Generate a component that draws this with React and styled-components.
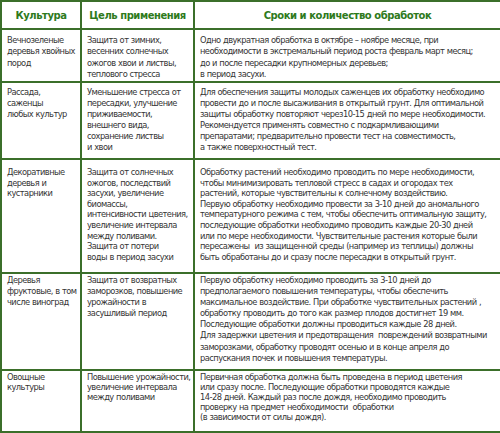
import React from "react";
import styled, { createGlobalStyle } from "styled-components";

const GlobalStyle = createGlobalStyle`
    html, body {
        margin: 0;
        padding: 0;
        background: #ffffff;
    }
    body {
        width: 500px;
        height: 433px;
        overflow: hidden;
    }
`;

const Table = styled.table`
    width: 500px;
    border-collapse: collapse;
    table-layout: fixed;
    font-family: "DejaVu Sans", Verdana, sans-serif;
    color: #353535;
    background: #ffffff;
`;

const HeadCell = styled.th`
    height: 26px;
    padding: 0;
    border: 2px solid #3b6f2a;
    color: #2e7a1c;
    font-size: 10px;
    font-weight: bold;
    letter-spacing: -0.45px;
    text-align: center;
    vertical-align: middle;
    white-space: nowrap;
`;

const Row = styled.tr`
    height: ${(p) => p.$h}px;
`;

const Cell = styled.td`
    padding: ${(p) => p.$pt}px 2px 0 5px;
    border: 2px solid #3b6f2a;
    vertical-align: top;
    font-size: 8.3px;
    letter-spacing: -0.55px;
    word-spacing: 0.3px;
    line-height: ${(p) => p.$lh}px;
    white-space: nowrap;
    overflow: hidden;
`;

const Line = styled.div`
    white-space: pre;
`;

const rows = [
    {
        h: 53, pt: 5, lh: 11.3,
        culture: ["Вечнозеленые", "деревья хвойных", "пород"],
        goal: ["Защита от зимних,", "весенних солнечных", "ожогов хвои и листвы,", "теплового стресса"],
        terms: [
            "Одно двукратная обработка в октябре – ноябре месяце, при",
            "необходимости в экстремальный период роста февраль март месяц;",
            "до и после пересадки крупномерных деревьев;",
            "в период засухи.",
        ],
    },
    {
        h: 77, pt: 4, lh: 11,
        culture: ["Рассада,", "саженцы", "любых культур"],
        goal: ["Уменьшение стресса от", "пересадки, улучшение", "приживаемости,", "внешнего вида,", "сохранение листвы", "и хвои"],
        terms: [
            "Для обеспечения защиты молодых саженцев их обработку необходимо",
            "провести до и после высаживания в открытый грунт. Для оптимальной",
            "защиты обработку повторяют через10-15 дней по мере необходимости.",
            "Рекомендуется применять совместно с подкармливающими",
            "препаратами; предварительно провести тест на совместимость,",
            "а также поверхностный тест.",
        ],
    },
    {
        h: 114, pt: 7, lh: 10.6,
        culture: ["Декоративные", "деревья и", "кустарники"],
        goal: [
            "Защита от солнечных", "ожогов, последствий", "засухи, увеличение", "биомассы,",
            "интенсивности цветения,", "увеличение интервала", "между поливами.",
            "Защита от потери", "воды в период засухи",
        ],
        terms: [
            "Обработку растений необходимо проводить по мере необходимости,",
            "чтобы минимизировать тепловой стресс в садах и огородах тех",
            "растений, которые чувствительны к солнечному воздействию.",
            "Первую обработку необходимо провести за 3-10 дней до аномального",
            "температурного режима с тем, чтобы обеспечить оптимальную защиту,",
            "последующие обработки необходимо проводить каждые 20-30 дней",
            "или по мере необходимости. Чувствительные растения которые были",
            "пересажены  из защищенной среды (например из теплицы) должны",
            "быть обработаны до и сразу после пересадки в открытый грунт.",
        ],
    },
    {
        h: 97, pt: 1, lh: 11.1,
        culture: ["Деревья", "фруктовые, в том", "числе виноград"],
        goal: ["Защита от возвратных", "заморозков, повышение", "урожайности в", "засушливый период"],
        terms: [
            "Первую обработку необходимо проводить за 3-10 дней до",
            "предполагаемого повышения температуры, чтобы обеспечить",
            "максимальное воздействие. При обработке чувствительных растений ,",
            "обработку проводить до того как размер плодов достигнет 19 мм.",
            "Последующие обработки должны проводиться каждые 28 дней.",
            "Для задержки цветения и предотвращения  повреждений возвратными",
            "заморозками, обработку проводят осенью и в конце апреля до",
            "распускания почек и повышения температуры.",
        ],
    },
    {
        h: 62, pt: 1, lh: 10,
        culture: ["Овощные", "культуры"],
        goal: ["Повышение урожайности,", "увеличение интервала", "между поливами"],
        terms: [
            "Первичная обработка должна быть проведена в период цветения",
            "или сразу после. Последующие обработки проводятся каждые",
            "14-28 дней. Каждый раз после дождя, необходимо проводить",
            "проверку на предмет необходимости  обработки",
            "(в зависимости от силы дождя).",
        ],
    },
];

function Lines({ items }) {
    return items.map((t, i) => <Line key={i}>{t}</Line>);
}

export default function App() {
    return (
        <>
            <GlobalStyle />
            <Table>
                <colgroup>
                    <col style={{ width: 80 }} />
                    <col style={{ width: 113 }} />
                    <col style={{ width: 307 }} />
                </colgroup>
                <thead>
                    <tr>
                        <HeadCell>Культура</HeadCell>
                        <HeadCell>Цель применения</HeadCell>
                        <HeadCell>Сроки и количество обработок</HeadCell>
                    </tr>
                </thead>
                <tbody>
                    {rows.map((r, i) => (
                        <Row key={i} $h={r.h}>
                            <Cell $pt={r.pt} $lh={r.lh}><Lines items={r.culture} /></Cell>
                            <Cell $pt={r.pt} $lh={r.lh}><Lines items={r.goal} /></Cell>
                            <Cell $pt={r.pt} $lh={r.lh}><Lines items={r.terms} /></Cell>
                        </Row>
                    ))}
                </tbody>
            </Table>
        </>
    );
}
